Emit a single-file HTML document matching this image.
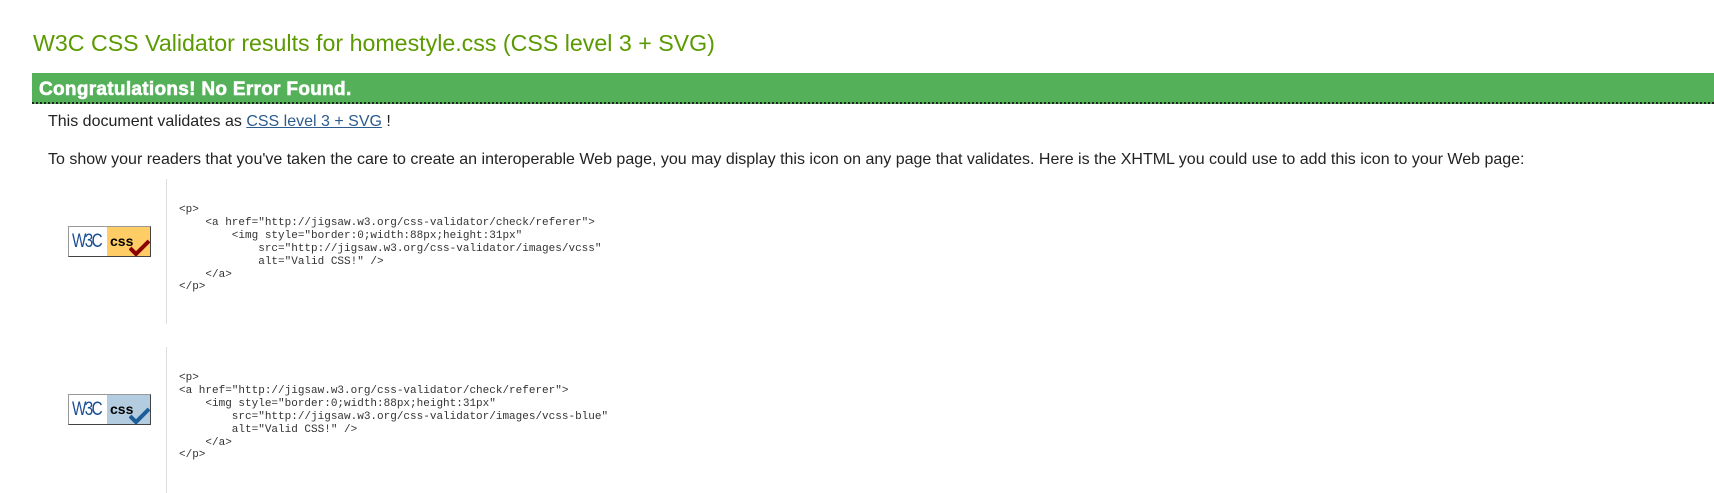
<!DOCTYPE html>
<html><head><meta charset="utf-8"><style>
body{margin:0;width:1714px;height:493px;background:#fff;font-family:"Liberation Sans",Arial,sans-serif;position:relative;overflow:hidden}
.a{position:absolute;white-space:nowrap}
h1{position:absolute;left:33px;top:30px;margin:0;font-size:23.2px;font-weight:normal;color:#5b9a00;white-space:nowrap}
.bar{position:absolute;left:32px;top:73px;width:1682px;height:31px;background:#55b05a;border-bottom:2px dotted #222;box-sizing:border-box}
.bar span{position:absolute;left:7px;top:6px;color:#fff;font-weight:bold;font-size:19px;letter-spacing:0.3px;-webkit-text-stroke:0.6px #fff}
p{margin:0;font-size:16px;color:#222}
a{color:#2d5b8e}
.div{position:absolute;left:166px;width:1px;background:#ddd}
pre{position:absolute;left:179px;margin:0;font-family:"Liberation Mono","DejaVu Sans Mono",monospace;font-size:11px;line-height:12.9px;color:#333}
.badge{position:absolute;left:68px;width:83px;height:31px;border:1px solid #999;border-right-color:#444;border-bottom-color:#444;box-sizing:border-box;background:#fff}
.badge .w{position:absolute;left:3px;top:4px;font-family:"Liberation Sans",sans-serif;font-size:19px;color:#1b4e94;letter-spacing:-2px;transform:scaleX(0.8);transform-origin:left}
.badge .c{position:absolute;left:38px;top:0;width:43px;height:29px}
.badge .t{position:absolute;left:41px;top:6px;font-weight:bold;font-size:14px;color:#000}
</style></head><body>
<h1>W3C CSS Validator results for homestyle.css (CSS level 3 + SVG)</h1>
<div class="bar"><span>Congratulations! No Error Found.</span></div>
<p class="a" style="left:48px;top:113px">This document validates as <a href="#">CSS level 3 + SVG</a> !</p>
<p class="a" style="left:48px;top:151px">To show your readers that you've taken the care to create an interoperable Web page, you may display this icon on any page that validates. Here is the XHTML you could use to add this icon to your Web page:</p>

<div class="div" style="top:179px;height:145px"></div>
<div class="badge" style="top:226px"><span class="w">W3C</span><div class="c" style="background:#fc6"></div><span class="t">css</span>
<svg style="position:absolute;left:60px;top:12px" width="22" height="18" viewBox="0 0 22 18"><path d="M1 9 L7 15 L20 2" fill="none" stroke="#8b0000" stroke-width="4"/></svg></div>
<pre style="top:204px">&lt;p&gt;
    &lt;a href="http://jigsaw.w3.org/css-validator/check/referer"&gt;
        &lt;img style="border:0;width:88px;height:31px"
            src="http://jigsaw.w3.org/css-validator/images/vcss"
            alt="Valid CSS!" /&gt;
    &lt;/a&gt;
&lt;/p&gt;</pre>

<div class="div" style="top:347px;height:146px"></div>
<div class="badge" style="top:394px"><span class="w">W3C</span><div class="c" style="background:#b4cce0"></div><span class="t">css</span>
<svg style="position:absolute;left:60px;top:12px" width="22" height="18" viewBox="0 0 22 18"><path d="M1 9 L7 15 L20 2" fill="none" stroke="#1c5d99" stroke-width="4"/></svg></div>
<pre style="top:372px">&lt;p&gt;
&lt;a href="http://jigsaw.w3.org/css-validator/check/referer"&gt;
    &lt;img style="border:0;width:88px;height:31px"
        src="http://jigsaw.w3.org/css-validator/images/vcss-blue"
        alt="Valid CSS!" /&gt;
    &lt;/a&gt;
&lt;/p&gt;</pre>
</body></html>
